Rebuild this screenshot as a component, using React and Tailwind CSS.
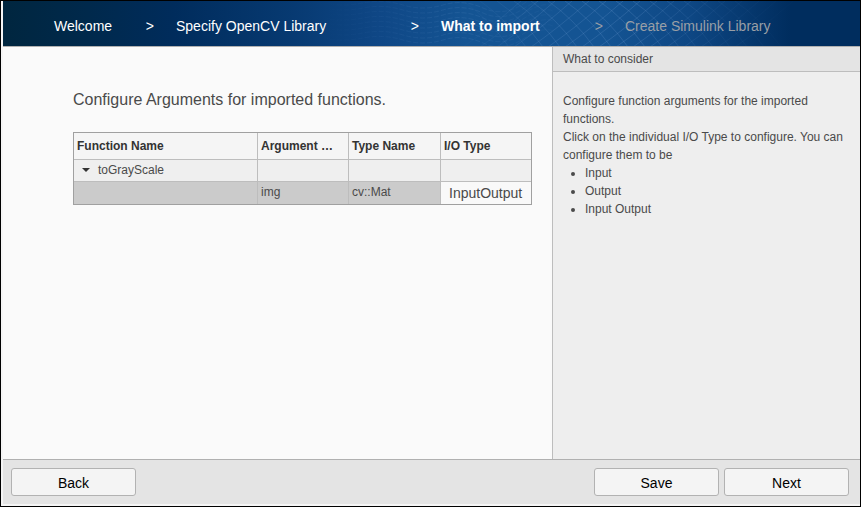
import { useState } from "react";

const COLUMNS = ["Function Name", "Argument …", "Type Name", "I/O Type"];

const STEPS = [
  { label: "Welcome", width: "w-[100px]", style: "text-white" },
  { label: "Specify OpenCV Library", width: "w-[243px]", style: "text-white" },
  { label: "What to import", width: "w-[162px]", style: "text-white font-bold", current: true },
  { label: "Create Simulink Library", width: "", style: "text-[#999fa6]" },
];

function Mesh() {
  const rising = [];
  const falling = [];
  const ripples = [];
  for (let i = 0; i < 17; i++) {
    const x = 460 + i * 17;
    rising.push(`M${x} 46Q${x + 26} 28 ${x + 58} 0`);
    falling.push(`M${x} 0Q${x + 26} 18 ${x + 46} 46`);
  }
  for (let i = 0; i < 8; i++) {
    const y = 2 + i * 5;
    ripples.push(`M320 ${y}q20 4 40 0t40 2t40 0t40 3t40 -4t30 -8`);
  }
  return (
    <svg className="absolute inset-0 h-full w-full" aria-hidden="true">
      <defs>
        <linearGradient id="fade" gradientUnits="userSpaceOnUse" x1="450" x2="800" y1="0" y2="0">
          <stop offset="0" stopColor="#7fa8dc" stopOpacity="0" />
          <stop offset="0.25" stopColor="#7fa8dc" stopOpacity="0.16" />
          <stop offset="0.5" stopColor="#7fa8dc" stopOpacity="0.2" />
          <stop offset="0.75" stopColor="#7fa8dc" stopOpacity="0.06" />
          <stop offset="1" stopColor="#7fa8dc" stopOpacity="0" />
        </linearGradient>
        <linearGradient id="rippleFade" gradientUnits="userSpaceOnUse" x1="320" x2="550" y1="0" y2="0">
          <stop offset="0" stopColor="#7fa8dc" stopOpacity="0" />
          <stop offset="0.6" stopColor="#7fa8dc" stopOpacity="0.12" />
          <stop offset="1" stopColor="#7fa8dc" stopOpacity="0.04" />
        </linearGradient>
      </defs>
      <path d={rising.join("") + falling.join("")} fill="none" stroke="url(#fade)" />
      <path d={ripples.join("")} fill="none" stroke="url(#rippleFade)" strokeDasharray="5 2" />
    </svg>
  );
}

function StepBar() {
  return (
    <nav
      aria-label="Steps"
      className="relative h-[46px] shrink-0 border-b border-[#b0b0b0] bg-[linear-gradient(90deg,#00263f_0%,#00294c_10%,#002c5c_20%,#073a72_34%,#0f4786_44%,#145493_54%,#145493_70%,#0e4784_80%,#002d5e_92%)]"
    >
      <Mesh />
      <ol className="relative flex h-full items-center gap-[22px] pt-1 pl-[51px] text-sm whitespace-nowrap">
        {STEPS.map((step, i) => (
          <li
            key={step.label}
            aria-current={step.current ? "step" : undefined}
            className={`flex shrink-0 justify-between ${step.width}`}
          >
            <span className={step.style}>{step.label}</span>
            {i < STEPS.length - 1 && (
              <span className={i === 2 ? "text-[#999fa6]" : "text-white"}>&gt;</span>
            )}
          </li>
        ))}
      </ol>
    </nav>
  );
}

function ArgumentsTable() {
  const [open, setOpen] = useState(true);
  const cell = "border-[#bdbdbd] px-[3px] pt-0 pb-[2px] text-left not-last:border-r";
  return (
    <div className="mt-5 w-[459px] border border-[#a0a0a0]">
      <table className="w-full table-fixed border-separate border-spacing-0 text-xs">
        <colgroup>
          <col className="w-[184px]" />
          <col className="w-[91px]" />
          <col className="w-[92px]" />
          <col />
        </colgroup>
        <thead>
          <tr className="h-[27px] bg-[#f5f5f5] text-[#333]">
            {COLUMNS.map((name) => (
              <th key={name} className="border-b border-[#bdbdbd] px-[3px] py-0 text-left whitespace-nowrap not-last:border-r">
                {name}
              </th>
            ))}
          </tr>
        </thead>
        <tbody>
          <tr className="h-[22px] bg-[#efefef]">
            <td className={`border-b ${cell}`}>
              <button
                type="button"
                aria-expanded={open}
                onClick={() => setOpen(!open)}
                className="flex items-center gap-2 pl-[5px]"
              >
                <svg width="8" height="4" viewBox="0 0 8 4" aria-hidden="true">
                  <path d="M0 0H8L4 4Z" fill="#333" />
                </svg>
                toGrayScale
              </button>
            </td>
            <td className={`border-b ${cell}`} />
            <td className={`border-b ${cell}`} />
            <td className={`border-b ${cell}`} />
          </tr>
          {open && (
            <tr className="h-[22px] bg-[#cbcbcb]">
              <td className={cell} />
              <td className={cell}>img</td>
              <td className={cell}>cv::Mat</td>
              <td className="bg-[#f9f9f9] p-0">
                <button type="button" className="block pl-2 text-sm">
                  InputOutput
                </button>
              </td>
            </tr>
          )}
        </tbody>
      </table>
    </div>
  );
}

function HelpPanel() {
  return (
    <aside className="w-[308px] shrink-0 border-l border-[#bdbdbd] bg-[#eee] text-xs">
      <h2 className="h-[25px] border-b border-[#bdbdbd] bg-[#e4e4e4] pl-[10px] leading-6">
        What to consider
      </h2>
      <div className="px-[10px] pt-5 leading-[18px]">
        <p>Configure function arguments for the imported functions.</p>
        <p>Click on the individual I/O Type to configure. You can configure them to be</p>
        <ul className="list-disc pl-[22px]">
          <li>Input</li>
          <li>Output</li>
          <li>Input Output</li>
        </ul>
      </div>
    </aside>
  );
}

function FooterButton({ children }) {
  return (
    <button
      type="button"
      className="h-7 w-[125px] rounded-[3px] border border-[#b2b2b2] bg-[#f4f4f4] pt-[2px] text-sm text-black"
    >
      {children}
    </button>
  );
}

export default function App() {
  return (
    <div className="flex min-h-screen flex-col border border-black bg-[#f5f5f5] pb-[2px] pl-[2px] font-['Liberation_Sans',Arial,sans-serif] text-[#4a4a4a]">
      <StepBar />
      <div className="flex flex-1">
        <main className="min-w-0 flex-1 bg-[#fafafa] pt-[41px] pl-[70px]">
          <h1 className="text-base">Configure Arguments for imported functions.</h1>
          <ArgumentsTable />
        </main>
        <HelpPanel />
      </div>
      <footer className="flex h-[45px] shrink-0 items-start gap-[5px] border-t border-[#b0b0b0] bg-[#e4e4e4] pt-2 pr-[11px] pl-2">
        <FooterButton>Back</FooterButton>
        <div className="flex-1" />
        <FooterButton>Save</FooterButton>
        <FooterButton>Next</FooterButton>
      </footer>
    </div>
  );
}
